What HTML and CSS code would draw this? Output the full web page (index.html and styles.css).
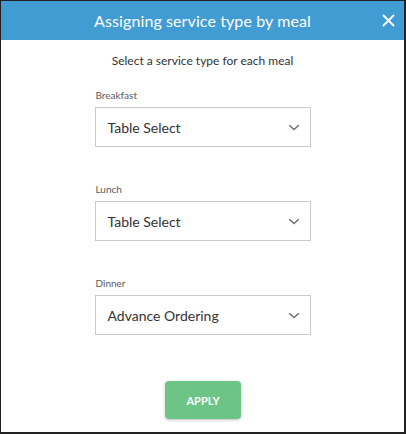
FILE: index.html
```html
<!DOCTYPE html>
<html>
<head>
<meta charset="utf-8">
<link rel="stylesheet" href="styles.css">
</head>
<body>
<div class="modal">
  <div class="header">
    <div class="title">Assigning service type by meal</div>
    <svg class="close" width="13" height="13" viewBox="0 0 13 13"><path d="M1 1 L12 12 M12 1 L1 12" stroke="#fff" stroke-width="1.8" fill="none"/></svg>
  </div>
  <div class="body">
    <div class="intro">Select a service type for each meal</div>
    <div class="field">
      <div class="label">Breakfast</div>
      <div class="select"><span>Table Select</span><svg class="chev" width="12" height="7" viewBox="0 0 12 7"><path d="M1.2 1.2 L6 5.6 L10.8 1.2" stroke="#707070" stroke-width="1.5" fill="none"/></svg></div>
    </div>
    <div class="field">
      <div class="label">Lunch</div>
      <div class="select"><span>Table Select</span><svg class="chev" width="12" height="7" viewBox="0 0 12 7"><path d="M1.2 1.2 L6 5.6 L10.8 1.2" stroke="#707070" stroke-width="1.5" fill="none"/></svg></div>
    </div>
    <div class="field">
      <div class="label">Dinner</div>
      <div class="select"><span>Advance Ordering</span><svg class="chev" width="12" height="7" viewBox="0 0 12 7"><path d="M1.2 1.2 L6 5.6 L10.8 1.2" stroke="#707070" stroke-width="1.5" fill="none"/></svg></div>
    </div>
    <button class="apply">APPLY</button>
  </div>
</div>
</body>
</html>
```

FILE: styles.css
```css
html, body {
  margin: 0;
  padding: 0;
  background: #fff;
}
.modal {
  box-sizing: border-box;
  width: 406px;
  height: 434px;
  border-top: 1px solid #222;
  border-left: 1px solid #222;
  border-right: 2px solid #222;
  border-bottom: 2px solid #222;
  font-family: Lato, "Open Sans", sans-serif;
  display: flex;
  flex-direction: column;
}
.header {
  position: relative;
  height: 39px;
  background: #419cd4;
  display: flex;
  align-items: center;
  justify-content: center;
}
.title {
  color: #fff;
  font-size: 16px;
  letter-spacing: 0.1px;
}
.close {
  position: absolute;
  right: 9px;
  top: 13px;
}
.body {
  display: flex;
  flex-direction: column;
  align-items: center;
}
.intro {
  margin-top: 14px;
  font-size: 12px;
  color: #333;
  line-height: 14px;
}
.field {
  width: 216px;
  margin-top: 21px;
}
.field + .field {
  margin-top: 36px;
}
.label {
  font-size: 10px;
  color: #5a5a5a;
  line-height: 12px;
  margin-bottom: 6px;
  padding-left: 1px;
}
.select {
  box-sizing: border-box;
  height: 40px;
  border: 1px solid #c9c9c9;
  display: flex;
  align-items: center;
  justify-content: space-between;
  padding: 0 10px 0 12px;
  font-size: 14px;
  color: #333;
}
.chev {
  margin-top: 1px;
}
.apply {
  margin-top: 46px;
  margin-left: 1px;
  width: 76px;
  height: 38px;
  border: none;
  border-radius: 4px;
  background: #6cc585;
  color: #fff;
  font-family: Lato, sans-serif;
  font-weight: bold;
  font-size: 11px;
  box-shadow: 0 1px 3px rgba(0,0,0,0.25);
  padding: 0;
}
```
